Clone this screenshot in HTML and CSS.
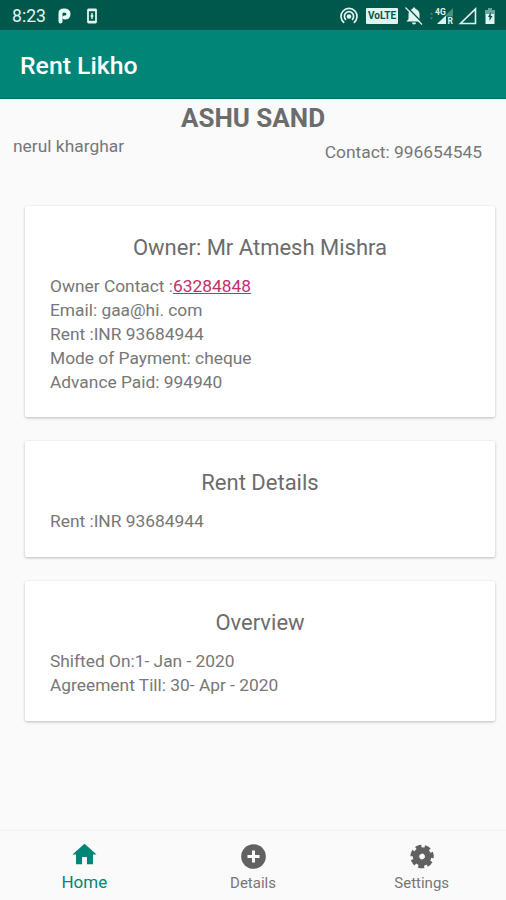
FILE: index.html
```html
<!DOCTYPE html>
<html lang="en">
<head>
  <meta charset="UTF-8">
  <meta name="viewport" content="width=device-width, initial-scale=1.0">
  <title>Rent Likho</title>
  <link rel="stylesheet" href="styles.css">
</head>
<body>
  <!-- Status Bar -->
  <div class="status-bar">
    <span class="time">8:23</span>
    <svg class="icon-p" width="13" height="16" viewBox="0 0 13 16"><path d="M2.500 13.500V5Q2.500 2.500 6 2.500Q10.500 2.500 10.500 6Q10.500 9.500 6.500 9.500" fill="none" stroke="#e8fffb" stroke-width="4" stroke-linecap="round"/></svg>
    <svg class="icon-battery-box" width="12" height="16" viewBox="0 0 12 16"><rect x="2" y="1.500" width="8" height="13" rx="0.500" fill="none" stroke="#e0f5f0" stroke-width="1.800"/><path d="M2 2.200h8M2 13.800h8" stroke="#e0f5f0" stroke-width="2"/><path d="M6 5v6M4.500 8h3" stroke="#e0f5f0" stroke-width="1.500"/></svg>
    <div class="status-right">
      <svg class="icon-hotspot" width="20" height="20" viewBox="0 0 20 20" fill="none" stroke="#e0f5f0" stroke-width="1.700"><path d="M5.200 16.800A8 8 0 1 1 14.800 16.800"/><path d="M7 13.800A4.600 4.600 0 1 1 13 13.800"/><circle cx="10" cy="10.500" r="1.500" fill="#e0f5f0"/></svg>
      <span class="volte">VoLTE</span>
      <svg class="icon-bell" width="20" height="20" viewBox="0 0 20 20"><path d="M10 1.500c1 0 1.500.7 1.500 1.500 2.600.7 4 2.800 4 5.500v4.500l2 2.500H2.500l2-2.500V8.500c0-2.700 1.400-4.800 4-5.500 0-.8.500-1.500 1.500-1.500zM8 16.500h4a2 2 0 0 1-4 0z" fill="#e0f5f0"/><path d="M3 1l16 16.500" stroke="#004f43" stroke-width="1.500"/><path d="M1.500 1.500l16.500 17" stroke="#e0f5f0" stroke-width="1.200"/></svg>
      <svg class="icon-signal" width="26" height="20" viewBox="0 0 26 20"><path d="M1 8.500l1.500-2 1.500 2zM1 11.500l1.500 2 1.500-2z" fill="#3f9183"/><path d="M24 2v8.500h-7v7H8.500z" fill="#488f82"/><path d="M17 9.500v8.500H8z" fill="#e0f5f0"/><text x="6" y="8.500" class="signal-text">4G</text><text x="18.500" y="18" class="signal-text">R</text></svg>
      <svg class="icon-sim" width="20" height="20" viewBox="0 0 20 20"><path d="M17.500 3v14.500H2.500z" fill="none" stroke="#e0f5f0" stroke-width="1.600"/></svg>
      <svg class="icon-charge" width="12" height="18" viewBox="0 0 12 18"><path d="M4 1h4v2h2.500v14h-9V3H4z" fill="#e0f5f0"/><path d="M1.500 3H4v-2h4v2h2.500v4h-9z" fill="#67a69a"/><path d="M6.800 5L4 10h1.500v4L8.500 9H6.800z" fill="#00574b"/></svg>
    </div>
  </div>

  <!-- App Bar -->
  <header class="app-bar">
    <h1>Rent Likho</h1>
  </header>

  <main class="content">
    <!-- Tenant Section -->
    <h2 class="tenant-name">ASHU SAND</h2>
    <div class="tenant-info">
      <span class="address">nerul kharghar</span>
      <span class="contact">Contact: 996654545</span>
    </div>

    <!-- Cards -->
    <section class="card">
      <h3>Owner: Mr Atmesh Mishra</h3>
      <p>Owner Contact :<a href="tel:63284848">63284848</a></p>
      <p>Email: gaa@hi. com</p>
      <p>Rent :INR 93684944</p>
      <p>Mode of Payment: cheque</p>
      <p>Advance Paid: 994940</p>
    </section>

    <section class="card">
      <h3>Rent Details</h3>
      <p>Rent :INR 93684944</p>
    </section>

    <section class="card">
      <h3>Overview</h3>
      <p>Shifted On:1- Jan - 2020</p>
      <p>Agreement Till: 30- Apr - 2020</p>
    </section>
  </main>

  <!-- Bottom Navigation -->
  <nav class="bottom-nav">
    <a class="nav-item active">
      <svg width="29" height="29" viewBox="0 0 24 24"><path d="M10 20v-6h4v6h5v-8h3L12 3 2 12h3v8z"/></svg>
      <span>Home</span>
    </a>
    <a class="nav-item">
      <svg width="29" height="29" viewBox="0 0 24 24"><circle cx="12" cy="12" r="10.200"/><path class="plus" d="M12 7v10M7 12h10"/></svg>
      <span>Details</span>
    </a>
    <a class="nav-item">
      <!-- seven teeth, one dash of the outer ring for each -->
      <svg width="29" height="29" viewBox="0 0 24 24"><g class="gear" transform="rotate(-24 12.500 12)"><circle cx="12.500" cy="12" r="5" stroke-width="5.400"/><circle cx="12.500" cy="12" r="8" stroke-width="3.400" pathLength="70" stroke-dasharray="6.400 3.600"/></g></svg>
      <span>Settings</span>
    </a>
  </nav>
</body>
</html>
```

FILE: styles.css
```css
/* General Styling */
* {
  box-sizing: border-box;
}

body {
  margin: 0;
  height: 900px;
  display: flex;
  flex-direction: column;
  background: #fafafa;
  font-family: Roboto, sans-serif;
  color: #777;
  overflow: hidden;
}

h1, h2, h3, p {
  margin: 0;
}

/* Status Bar */
.status-bar {
  height: 30px;
  display: flex;
  align-items: center;
  padding: 2px 10px 0 12px;
  background: #00574b;
  color: #e0f5f0;
}

.time {
  width: 34px;
  font-size: 17.6px;
}

.icon-p {
  margin-left: 12px;
}

.icon-battery-box {
  margin-left: 15px;
}

.status-right {
  margin-left: auto;
  display: flex;
  align-items: center;
}

.volte {
  width: 32px;
  height: 16px;
  margin-left: 7px;
  border-radius: 1px;
  background: #e0f5f0;
  color: #00574b;
  font-size: 10px;
  font-weight: bold;
  line-height: 16px;
  text-align: center;
}

.icon-bell {
  margin-left: 6px;
}

.icon-signal {
  margin-left: 5px;
}

.signal-text {
  fill: #e0f5f0;
  font-size: 8.5px;
  font-weight: bold;
}

.icon-sim {
  margin-left: 3px;
}

.icon-charge {
  margin-left: 6px;
}

/* App Bar */
.app-bar {
  height: 69px;
  display: flex;
  align-items: center;
  padding: 3px 20px 0;
  background: #008577;
  border-bottom: 1px solid #007064;
  color: #fff;
}

.app-bar h1 {
  font-size: 24.8px;
  font-weight: 500;
}

/* Tenant Section */
.content {
  flex: 1;
}

.tenant-name {
  height: 35px;
  font-size: 26px;
  font-weight: bold;
  line-height: 38px;
  text-align: center;
  color: #6c6c6c;
}

.tenant-info {
  height: 72px;
  display: flex;
  justify-content: space-between;
  padding: 0 24px 0 13px;
  font-size: 17.4px;
  line-height: 24px;
}

.contact {
  padding-top: 6px;
}

/* Cards */
.card {
  margin: 0 11px 24px 25px;
  padding: 25px 25px 23.4px;
  background: #fff;
  border-radius: 2px;
  box-shadow: 0 1px 3px rgba(0, 0, 0, 0.25);
}

.card:last-child {
  padding-bottom: 24px;
}

.card h3 {
  height: 43px;
  font-size: 22px;
  font-weight: normal;
  line-height: 33px;
  text-align: center;
  color: #6c6c6c;
}

.card p {
  font-size: 17.35px;
  line-height: 24px;
}

.card a {
  color: #c2306a;
}

/* Bottom Navigation */
.bottom-nav {
  height: 71px;
  display: flex;
  border-top: 2px solid #f4f4f4;
}

.nav-item {
  flex: 1;
  display: flex;
  flex-direction: column;
  align-items: center;
  padding-top: 11px;
  font-size: 15px;
}

.nav-item svg {
  fill: #616161;
}

.nav-item span {
  margin-top: 3px;
  line-height: 18px;
}

.nav-item.active {
  color: #008577;
  font-size: 17px;
}

.nav-item.active svg {
  margin-top: -2px;
  fill: #008577;
}

.nav-item.active span {
  margin-top: 4px;
}

.plus {
  stroke: #fafafa;
  stroke-width: 2.5;
}

.nav-item .gear {
  fill: none;
  stroke: #616161;
}
```
